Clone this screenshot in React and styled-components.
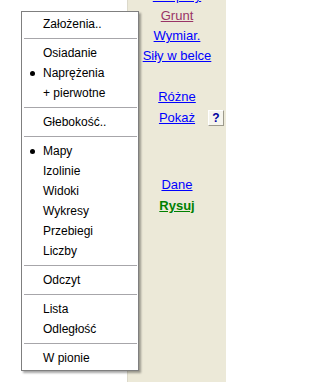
import React from "react";
import styled, { createGlobalStyle } from "styled-components";

const GlobalStyle = createGlobalStyle`
  html, body {
    margin: 0;
    padding: 0;
    background: #ffffff;
  }
  body {
    font-family: "Liberation Sans", Arial, sans-serif;
    font-size: 12px;
  }
`;

const menu = [
  { label: "Założenia.." },
  "sep",
  { label: "Osiadanie" },
  { label: "Naprężenia", checked: true },
  { label: "+ pierwotne" },
  "sep",
  { label: "Głebokość.." },
  "sep",
  { label: "Mapy", checked: true },
  { label: "Izolinie" },
  { label: "Widoki" },
  { label: "Wykresy" },
  { label: "Przebiegi" },
  { label: "Liczby" },
  "sep",
  { label: "Odczyt" },
  "sep",
  { label: "Lista" },
  { label: "Odległość" },
  "sep",
  { label: "W pionie" },
];

function App() {
  return (
    <>
      <GlobalStyle />
      <Screen>
        <Canvas />
        <SidePanel>
          <LinkRow $top={-14}>
            <Link>Podpory</Link>
          </LinkRow>
          <LinkRow>
            <Link $visited>Grunt</Link>
          </LinkRow>
          <LinkRow>
            <Link>Wymiar.</Link>
          </LinkRow>
          <LinkRow>
            <Link>Siły w belce</Link>
          </LinkRow>
          <LinkRow $top={21}>
            <Link>Różne</Link>
          </LinkRow>
          <ButtonRow>
            <span />
            <Link>Pokaż</Link>
            <HelpButton>?</HelpButton>
          </ButtonRow>
          <LinkRow $top={47}>
            <Link>Dane</Link>
          </LinkRow>
          <LinkRow $top={1}>
            <Link $green>Rysuj</Link>
          </LinkRow>
        </SidePanel>

        <PopupMenu>
          {menu.map((item, idx) =>
            item === "sep" ? (
              <Separator key={idx} />
            ) : (
              <MenuItem key={idx}>
                <Check>{item.checked && <Dot />}</Check>
                {item.label}
              </MenuItem>
            )
          )}
        </PopupMenu>
      </Screen>
    </>
  );
}

export default App;

const Screen = styled.div`
  position: relative;
  display: flex;
  width: 226px;
  height: 382px;
  overflow: hidden;
`;

const Canvas = styled.div`
  width: 127px;
  flex-shrink: 0;
  background: #ffffff;
`;

const SidePanel = styled.div`
  flex: 1;
  display: flex;
  flex-direction: column;
  align-items: center;
  background: #ece9d8;
  border-left: 1px solid #dcd9cb;
`;

const LinkRow = styled.div`
  height: 20px;
  line-height: 20px;
  margin-top: ${(p) => p.$top || 0}px;
  font-size: 13px;
  white-space: nowrap;
`;

const ButtonRow = styled.div`
  display: grid;
  grid-template-columns: 1fr auto 1fr;
  align-items: center;
  width: 100%;
  height: 20px;
  line-height: 20px;
  margin-top: 1px;
  font-size: 13px;
`;

const Link = styled.span`
  color: ${(p) => (p.$green ? "#008000" : p.$visited ? "#993366" : "#0000ff")};
  font-weight: ${(p) => (p.$green ? "bold" : "normal")};
  text-decoration: underline;
  cursor: pointer;
`;

const HelpButton = styled.button`
  justify-self: end;
  width: 16px;
  height: 16px;
  margin: 0 2px 0 0;
  padding: 0;
  font-family: "Liberation Sans", Arial, sans-serif;
  font-size: 12px;
  font-weight: bold;
  line-height: 14px;
  color: #0000a0;
  background: #f6f5ee;
  border: 1px solid;
  border-color: #ffffff #9d9a8c #9d9a8c #ffffff;
`;

const PopupMenu = styled.div`
  position: absolute;
  left: 21px;
  top: 11px;
  width: 118px;
  box-sizing: border-box;
  padding: 2px 0;
  background: #ffffff;
  border: 1px solid #7f7f7f;
  box-shadow: 2px 2px 2px rgba(0, 0, 0, 0.35);
`;

const MenuItem = styled.div`
  display: flex;
  align-items: center;
  height: 20px;
  line-height: 20px;
  color: #000000;
  white-space: nowrap;
`;

const Check = styled.span`
  display: flex;
  justify-content: center;
  align-items: center;
  width: 21px;
`;

const Dot = styled.span`
  width: 5px;
  height: 5px;
  border-radius: 50%;
  background: #000000;
`;

const Separator = styled.div`
  height: 1px;
  margin: 4px 1px 4px 2px;
  background: #a7a6aa;
`;
